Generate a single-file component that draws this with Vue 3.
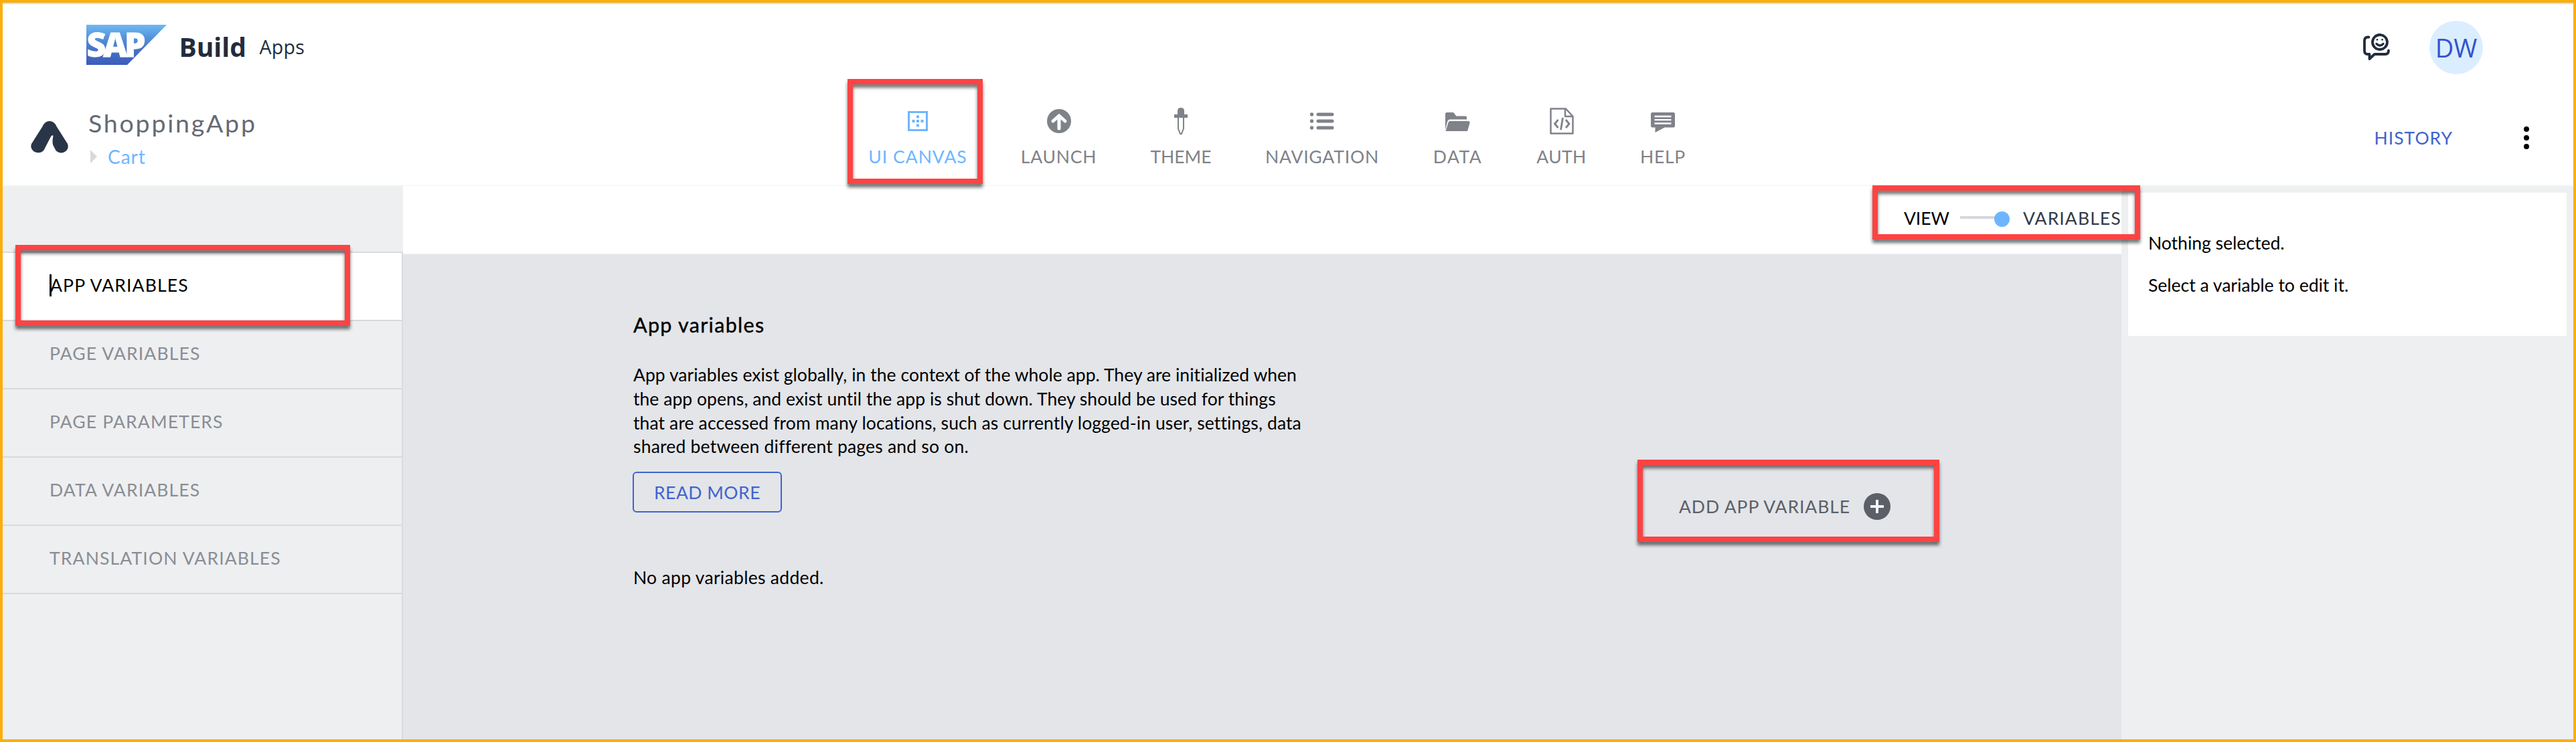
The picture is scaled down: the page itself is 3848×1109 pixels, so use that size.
<script setup>
const tools = [
  { id: 'canvas', label: 'UI CANVAS', active: true },
  { id: 'launch', label: 'LAUNCH' },
  { id: 'theme', label: 'THEME' },
  { id: 'navigation', label: 'NAVIGATION' },
  { id: 'data', label: 'DATA' },
  { id: 'auth', label: 'AUTH' },
  { id: 'help', label: 'HELP' },
]
const sections = [
  { label: 'APP VARIABLES', active: true },
  { label: 'PAGE VARIABLES' },
  { label: 'PAGE PARAMETERS' },
  { label: 'DATA VARIABLES' },
  { label: 'TRANSLATION VARIABLES' },
]
</script>

<template>
  <div class="app">
    <header class="shell">
      <svg class="sap" width="120" height="60" viewBox="0 0 120 60">
        <defs>
          <linearGradient id="sapFill" x1="0" y1="0" x2="0" y2="1">
            <stop offset="0" stop-color="#6db9f2" />
            <stop offset="0.25" stop-color="#5a9be0" />
            <stop offset="0.6" stop-color="#4674ca" />
            <stop offset="1" stop-color="#3d5cb9" />
          </linearGradient>
        </defs>
        <path d="M0 0H120L61 60H0Z" fill="url(#sapFill)" />
        <text class="sap-text" x="0.5" y="48" textLength="88" lengthAdjust="spacing">SAP</text>
      </svg>
      <span class="build">Build</span>
      <span class="apps">Apps</span>
      <div class="shell-right">
        <svg class="feedback" width="42" height="42" viewBox="0 0 42 42" fill="none" stroke="#222c3e" stroke-width="3.8" stroke-linecap="round" stroke-linejoin="round">
          <path d="M9.5 5.5H8Q3 5.500 3 11V26Q3 31 8 31H10.500V38L18 31H34Q39 31 39 25.500" />
          <circle cx="26" cy="13" r="11" />
          <path d="M21 15.500Q26 20.500 31 15.500" stroke-width="3.200" />
          <path d="M22 9.300h.1M29.500 9.300h.1" stroke-width="2.800" />
        </svg>
        <div class="avatar">DW</div>
      </div>
    </header>

    <div class="bar">
      <svg class="logo" width="56" height="48" viewBox="0 0 56 48">
        <path d="M17.500 8Q21 0 28 0T38.500 8L55 34C59 45 45 52 37.500 44L33.500 36.500Q31.500 32 33.500 22Q31.500 19.500 28.500 26L19.500 43.500C12 52 -3 45 1 34Z" fill="#293648" />
      </svg>
      <div class="title">
        <div class="name">ShoppingApp</div>
        <div class="crumb">
          <svg width="10" height="20" viewBox="0 0 10 20"><path d="M0 0L10 10L0 20Z" fill="#d8d9dc" /></svg>
          <span>Cart</span>
        </div>
      </div>
      <nav class="tools">
        <div v-for="t in tools" :key="t.id" class="tool" :class="[t.id, { on: t.active }]">
          <svg width="42" height="42" viewBox="0 0 42 42">
            <template v-if="t.id === 'canvas'">
              <rect x="7.500" y="7.500" width="27" height="27" fill="none" stroke="currentColor" stroke-width="3" />
              <path d="M19 12.500h4v4h-4zM19 19h4v4h-4zM19 25.500h4v4h-4zM12.500 19h4v4h-4zM25.500 19h4v4h-4z" fill="currentColor" />
            </template>
            <template v-else-if="t.id === 'launch'">
              <circle cx="21" cy="21" r="18" fill="currentColor" />
              <path d="M21 32V14M12 21L21 13L30 21" fill="none" stroke="#fff" stroke-width="5" stroke-linecap="round" stroke-linejoin="miter" />
            </template>
            <template v-else-if="t.id === 'theme'">
              <path d="M16 11V5.500Q16 1 21 1T26 5.500V11H31V16H11V11Z" fill="currentColor" />
              <path d="M17 16V32L20 40H22L25 32V16" fill="none" stroke="currentColor" stroke-width="2" />
            </template>
            <template v-else-if="t.id === 'navigation'">
              <circle cx="5.500" cy="11" r="2.700" fill="currentColor" />
              <circle cx="5.500" cy="21" r="2.700" fill="currentColor" />
              <circle cx="5.500" cy="31" r="2.700" fill="currentColor" />
              <path d="M15 11H36M15 21H36M15 31H36" stroke="currentColor" stroke-width="5" stroke-linecap="round" />
            </template>
            <template v-else-if="t.id === 'data'">
              <path d="M2 34V10.500Q2 8 4.500 8H14L18.500 13.500H32Q34 13.500 34 15.500V18.500H9Q6 18.500 5 22Z" fill="currentColor" />
              <path d="M9.500 21H36Q39 21 38.500 24L35 36H2.500L6.500 23Q7 21 9.500 21Z" fill="currentColor" />
            </template>
            <template v-else-if="t.id === 'auth'">
              <path d="M4.500 2.500H27L37.500 14V39.500H4.500ZM26 2.500V14H37" fill="none" stroke="currentColor" stroke-width="2.500" stroke-linejoin="round" />
              <path d="M15.500 19L10.500 25L15.500 31M27 19L32 25L27 31M22.500 16L19.500 34" fill="none" stroke="currentColor" stroke-width="2.800" />
            </template>
            <template v-else>
              <path d="M5.500 8H36.500Q39 8 39 10.500V28Q39 30.500 36.500 30.500H23.500L9.500 38V30.500H5.500Q3 30.500 3 28V10.500Q3 8 5.500 8Z" fill="currentColor" />
              <path d="M8.500 14H33.500M8.500 19.200H33.500M8.500 24.500H33.500" stroke="#fff" stroke-width="2.300" />
            </template>
          </svg>
          <span>{{ t.label }}</span>
        </div>
      </nav>
      <span class="history">HISTORY</span>
      <svg class="dots" width="10" height="36" viewBox="0 0 10 36"><circle cx="5" cy="5" r="4" /><circle cx="5" cy="18" r="4" /><circle cx="5" cy="31" r="4" /></svg>
    </div>

    <main class="work">
      <aside class="side">
        <div class="side-gap"></div>
        <ul class="list">
          <li v-for="s in sections" :key="s.label" :class="{ on: s.active }">
            <i v-if="s.active" class="caret"></i>{{ s.label }}
          </li>
        </ul>
      </aside>

      <section class="center">
        <div class="switch">
          <span class="view">VIEW</span>
          <span class="slider"><i class="track"></i><i class="knob"></i></span>
          <span class="vars">VARIABLES</span>
        </div>
        <div class="canvas">
          <div class="info">
            <h1>App variables</h1>
            <p class="l1">App variables exist globally, in the context of the whole app. They are initialized when</p>
            <p class="l2">the app opens, and exist until the app is shut down. They should be used for things</p>
            <p class="l3">that are accessed from many locations, such as currently logged-in user, settings, data</p>
            <p class="l4">shared between different pages and so on.</p>
            <button class="more">READ MORE</button>
            <div class="none">No app variables added.</div>
          </div>
          <div class="add">
            <span>ADD APP VARIABLE</span>
            <svg width="40" height="40" viewBox="0 0 40 40"><circle cx="20" cy="20" r="20" fill="#5c5f67" /><path d="M20 10V30M10 20H30" stroke="#f2f3f5" stroke-width="4" /></svg>
          </div>
        </div>
      </section>

      <aside class="props">
        <div class="card">
          <p>Nothing selected.</p>
          <p class="second">Select a variable to edit it.</p>
        </div>
      </aside>
    </main>

    <div class="mark mark-canvas"></div>
    <div class="mark mark-section"></div>
    <div class="mark mark-switch"></div>
    <div class="mark mark-add"></div>
  </div>
</template>

<style>
body { margin: 0; overflow: hidden; }
</style>

<style scoped>
* { box-sizing: border-box; }
.app {
  position: relative; width: 3848px; height: 1109px; border: 4px solid #fbae0b; background: #fff;
  display: flex; flex-direction: column; overflow: hidden;
  font-family: Lato, "Open Sans", sans-serif; font-size: 26.5px; line-height: 36px; color: #000; white-space: nowrap;
}
.shell { height: 126px; flex: none; border-top: 2px solid #d9dadd; padding-left: 125px; display: flex; align-items: flex-start; font-family: "Open Sans", sans-serif; color: #222c3e; }
.sap { margin-top: 31px; flex: none; }
.sap-text { font: 800 50px "Open Sans", sans-serif; fill: #fff; stroke: #fff; stroke-width: 0.8px; }
.build { font-size: 39px; font-weight: 700; line-height: 50px; width: 120px; margin: 39px 0 0 18.500px; }
.apps { font-size: 28.500px; line-height: 40px; margin-top: 44px; letter-spacing: 0.300px; }
.shell-right { margin-left: auto; padding-right: 135px; display: flex; }
.feedback { margin: 44px 58px 0 0; }
.avatar { margin-top: 25px; width: 80px; height: 80px; border-radius: 50%; background: #dbeeff; color: #3454cf; font-size: 38px; line-height: 80px; text-align: center; }

.bar { height: 148px; flex: none; border-bottom: 2px solid #f7f8f9; display: flex; align-items: flex-start; }
.logo { margin: 51px 0 0 42px; flex: none; }
.title { width: 1191px; padding: 29px 0 0 30px; flex: none; }
.name { font-size: 37.500px; line-height: 50px; height: 46px; letter-spacing: 2.800px; color: #666a73; }
.crumb { display: flex; align-items: center; margin-top: 11px; padding-left: 3px; color: #6db6ff; font-size: 28px; letter-spacing: 1px; }
.crumb span { margin-left: 16px; }
.tools { display: flex; gap: 80px; padding-top: 30px; margin-left: 4px; }
.tool { display: flex; flex-direction: column; align-items: center; color: #7f8289; letter-spacing: 0.8px; }
.tool span { margin-top: 14px; }
.tool.on { color: #6db6ff; }
.canvas.tool { width: 148px; letter-spacing: 1px; }
.launch { width: 113px; }
.theme { width: 92px; letter-spacing: 0; }
.navigation { width: 170px; }
.data { width: 75px; letter-spacing: 1.500px; }
.auth { width: 75px; letter-spacing: 0.400px; }
.help { width: 68px; letter-spacing: 0.700px; }
.history { margin: 58px 0 0 auto; color: #3f64cf; letter-spacing: 1px; }
.dots { margin: 58px 65px 0 105px; }

.work { flex: 1; display: flex; min-height: 0; }
.side { width: 598px; flex: none; background: #eeeff1; display: flex; flex-direction: column; }
.side-gap { height: 98px; flex: none; }
.list { list-style: none; margin: 0; padding: 0; flex: 1; border-right: 2px solid #d9dbde; border-top: 2px solid #d9dbde; }
.list li { height: 102px; border-bottom: 2px solid #d7d9dc; padding-left: 70px; line-height: 97px; letter-spacing: 1.150px; color: #8a8d94; position: relative; }
.list li.on { background: #fff; color: #000; padding-left: 71px; }
.caret { position: absolute; left: 70px; top: 32px; width: 3px; height: 33px; background: #000; }

.center { width: 2567px; flex: none; display: flex; flex-direction: column; }
.switch { height: 102px; flex: none; border-bottom: 2px solid #f7f8f9; padding-top: 30px; display: flex; justify-content: flex-end; align-items: flex-start; }
.slider { display: flex; align-items: center; height: 38px; margin: 0 20px 0 16px; }
.track { width: 52px; height: 4px; background: #d5d7db; margin-top: -4px; }
.knob { width: 23px; height: 23px; border-radius: 50%; background: #6db6ff; margin-left: -1px; }
.vars { width: 147px; letter-spacing: 1.100px; color: #333a48; }
.center .canvas { flex: 1; background: #e3e5e9; display: flex; align-items: flex-start; padding-left: 344px; }
.info { width: 1562px; }
h1 { font-weight: 400; font-size: 30.500px; line-height: 40px; letter-spacing: 1.300px; margin: 85px 0 38px; -webkit-text-stroke: 0.400px #000; }
p { margin: 0; }
.info p { line-height: 35.800px; letter-spacing: 0.040px; }
.info .l3 { letter-spacing: 0.110px; }
.info .l4 { letter-spacing: 0.200px; }
.more { display: block; margin: 19px 0 0 -1px; width: 223px; height: 61px; border: 2px solid #3f64cf; border-radius: 6px; background: none; color: #3f64cf; font: inherit; letter-spacing: 0.500px; padding: 0; }
.none { margin-top: 79px; letter-spacing: 0.300px; }
.add { display: flex; align-items: center; margin-top: 357px; color: #5c5f67; letter-spacing: 0.900px; }
.add svg { margin-left: 20px; }
.add span { width: 256px; }

.props { flex: 1; background: #eeeff1; padding: 10px 10px 0; }
.card { background: #fff; height: 214px; padding: 57px 0 0 30px; }
.second { margin-top: 27px; }

.mark { position: absolute; border: 8px solid #fe4343; filter: drop-shadow(0 5px 2.500px rgba(0, 0, 0, 0.550)); }
.mark-canvas { left: 1262px; top: 114px; width: 202px; height: 157px; }
.mark-section { left: 19px; top: 362px; width: 500px; height: 121px; }
.mark-switch { left: 2793px; top: 273px; width: 400px; height: 81px; }
.mark-add { left: 2442px; top: 683px; width: 451px; height: 123px; }
</style>
